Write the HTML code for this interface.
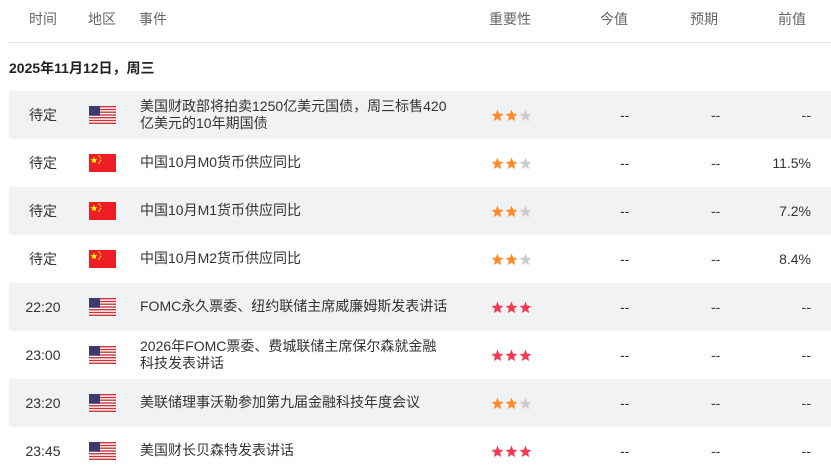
<!DOCTYPE html><html><head><meta charset="utf-8"><style>
body{margin:0;width:831px;height:476px;overflow:hidden;background:#fff;font-family:"Liberation Sans","Noto Sans CJK SC",sans-serif;font-size:14px;color:#333}
.a{position:absolute;white-space:nowrap}
.h{color:#666;top:9px;font-size:14px}
.row{position:absolute;left:9px;width:822px;height:48px}
.g{background:#f1f2f4}
.flag{position:absolute;left:80px;top:15px;width:27px;height:18px}
.ev{position:absolute;left:131px;line-height:17px;white-space:normal}
.st{position:absolute;left:482px;top:18px;height:13px}
.d{position:absolute;top:14px;line-height:20px}
</style></head><body>
<div class="a h" style="left:29px">时间</div><div class="a h" style="left:88px">地区</div><div class="a h" style="left:139px">事件</div><div class="a h" style="left:489px">重要性</div><div class="a h" style="left:600px">今值</div><div class="a h" style="left:690px">预期</div><div class="a h" style="left:778px">前值</div>
<div class="a" style="left:9px;top:42px;width:822px;height:1px;background:#e5e5e5"></div>
<div class="a" style="left:9px;top:58px;font-weight:bold;color:#222">2025年11月12日，周三</div>
<svg width="0" height="0" style="position:absolute"><defs>
<symbol id="us" viewBox="0 0 27 18"><rect width="27" height="18" fill="#fff"/><g fill="#c8363c"><rect y="0" width="27" height="1.4"/><rect y="2.8" width="27" height="1.4"/><rect y="5.5" width="27" height="1.4"/><rect y="8.3" width="27" height="1.4"/><rect y="11" width="27" height="1.4"/><rect y="13.8" width="27" height="1.4"/><rect y="16.6" width="27" height="1.4"/></g><rect width="11" height="9.7" fill="#3c3b6e"/></symbol>
<symbol id="cn" viewBox="0 0 27 18"><rect width="27" height="18" fill="#ee1c25"/><polygon points="5,2.5 5.9,5.2 8.7,5.2 6.4,6.8 7.3,9.5 5,7.8 2.7,9.5 3.6,6.8 1.3,5.2 4.1,5.2" fill="#ff0"/><g fill="#ff0"><circle cx="10" cy="2" r=".8"/><circle cx="11.5" cy="4" r=".8"/><circle cx="11.5" cy="6.8" r=".8"/><circle cx="10" cy="8.8" r=".8"/></g></symbol>
<symbol id="s" viewBox="0 0 24 24"><polygon points="12,1 15,8.6 23,9.2 16.9,14.4 18.8,22.4 12,18 5.2,22.4 7.1,14.4 1,9.2 9,8.6"/></symbol>
</defs></svg>
<div id="rows"></div>
<script>
function S(c){return '<svg width="13" height="13" style="margin-right:1px;fill:'+c+'"><use href="#s"/></svg>';}
var O=S('#ff8a2b')+S('#ff8a2b')+S('#ccc'),R=S('#f33a55')+S('#f33a55')+S('#f33a55');
var d=[["待定","us","美国财政部将拍卖1250亿美元国债，周三标售420亿美元的10年期国债",O,"--",312],["待定","cn","中国10月M0货币供应同比",O,"11.5%"],["待定","cn","中国10月M1货币供应同比",O,"7.2%"],["待定","cn","中国10月M2货币供应同比",O,"8.4%"],["22:20","us","FOMC永久票委、纽约联储主席威廉姆斯发表讲话",R,"--"],["23:00","us","2026年FOMC票委、费城联储主席保尔森就金融科技发表讲话",R,"--",300],["23:20","us","美联储理事沃勒参加第九届金融科技年度会议",O,"--"],["23:45","us","美国财长贝森特发表讲话",R,"--"]];
var h='';d.forEach(function(r,i){var two=!!r[5];h+='<div class="row'+(i%2?'':' g')+'" style="top:'+(91+i*48)+'px"><div class="a" style="left:0;width:68px;text-align:center;top:14px;line-height:20px">'+r[0]+'</div><svg class="flag"><use href="#'+r[1]+'"/></svg><div class="ev" style="top:'+(two?7:15)+'px;width:'+(two?r[5]:400)+'px">'+r[2]+'</div><div class="st">'+r[3]+'</div><div class="d" style="left:611px">--</div><div class="d" style="left:702px">--</div><div class="d" style="right:20px">'+r[4]+'</div></div>';});
document.getElementById('rows').innerHTML=h;
</script>
</body></html>
